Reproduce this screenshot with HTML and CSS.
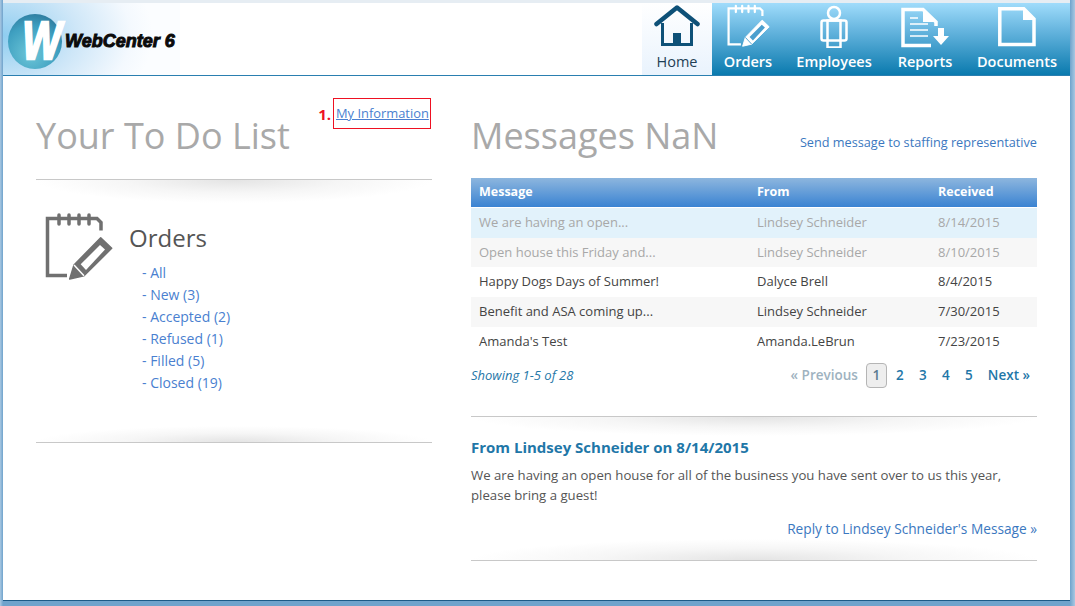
FILE: index.html
```html
<!DOCTYPE html>
<html lang="en">
<head>
<meta charset="utf-8">
<title>WebCenter 6</title>
<link rel="stylesheet" href="styles.css">
</head>
<body>
<div class="window">
  <header class="topbar">
    <div class="logo">
      <span class="logo-ball"><span class="logo-w">W</span></span>
      <span class="logo-text">WebCenter 6</span>
    </div>
    <nav class="nav">
      <a class="nav-item nav-home">
        <svg class="nav-icon" width="46" height="44" viewBox="0 0 46 44"><path d="M2.500 20 23 3.500 43.500 20" fill="none" stroke="#0e5178" stroke-width="4.500" stroke-linecap="round" stroke-linejoin="round"/><path d="M8.500 19v21.500h29V19" fill="none" stroke="#0e5178" stroke-width="3"/><rect x="19" y="29" width="8" height="12" fill="#0e5178"/></svg>
        <span>Home</span>
      </a>
      <a class="nav-item nav-orders">
        <svg class="nav-icon" width="43" height="44" viewBox="0 0 68 68"><path d="M22 63H2.500V6H52l4 4v8" fill="none" stroke="#fff" stroke-width="3.500"/><path d="M14 2v10M24 2v10M34 2v10M44 2v10" stroke="#fff" stroke-width="3.500" stroke-linecap="round"/><path d="M24.700 66 29 52 55.700 24.700l11 10.600L39 62.700z" fill="#fff" stroke="#fff" stroke-width="1.500" stroke-linejoin="round"/><path d="M35.700 51.300 55 32l5 4.500L41 57z" fill="#4a9fce"/><path d="M29 52l10 10.700" stroke="#4a9fce" stroke-width="1.500"/></svg>
        <span>Orders</span>
      </a>
      <a class="nav-item nav-emp">
        <svg class="nav-icon" width="30" height="44" viewBox="0 0 30 44"><circle cx="15" cy="9" r="6" fill="none" stroke="#fff" stroke-width="2.500"/><rect x="2.500" y="16.500" width="25" height="20" rx="2" fill="none" stroke="#fff" stroke-width="2.500"/><rect x="8.500" y="16.500" width="13" height="27" fill="none" stroke="#fff" stroke-width="2.500"/></svg>
        <span>Employees</span>
      </a>
      <a class="nav-item nav-rep">
        <svg class="nav-icon" width="50" height="44" viewBox="0 0 50 44"><path d="M31 41.500H3V5.500h20L36 18v4" fill="none" stroke="#fff" stroke-width="3.500"/><path d="M23 5v13h13z" fill="#fff"/><path d="M10 14h8M10 20h18M10 26h18M10 32h18" stroke="#fff" stroke-width="1.500"/><path d="M38 24h6v8h5l-8 9-8-9h5z" fill="#fff"/></svg>
        <span>Reports</span>
      </a>
      <a class="nav-item nav-doc">
        <svg class="nav-icon" width="38" height="44" viewBox="0 0 38 44"><path d="M1.800 4.800h24L36 15v25.500H1.800z" fill="none" stroke="#fff" stroke-width="3.500"/><path d="M25 4v12h12z" fill="#fff"/></svg>
        <span>Documents</span>
      </a>
    </nav>
  </header>

  <main class="content">
    <section class="col-left">
      <div class="title-row">
        <h1 class="page-title">Your To Do List</h1>
        <div class="info-callout">
          <span class="callout-num">1.</span>
          <a class="callout-link">My Information</a>
        </div>
      </div>
      <div class="rule rule-down"></div>
      <div class="todo">
        <svg class="todo-icon" width="68" height="68" viewBox="0 0 68 68"><path d="M22 62.500H2.500V5.500H52l4 4v8" fill="none" stroke="#707070" stroke-width="3.500"/><path d="M14 2v9M24 2v9M34 2v9M44 2v9" stroke="#707070" stroke-width="3.500" stroke-linecap="round"/><path d="M24.700 66 29 52 55.700 24.700l11 10.600L39 62.700z" fill="#707070" stroke="#707070" stroke-width="1.500" stroke-linejoin="round"/><path d="M35.700 51.300 55 32l5 4.500L41 57z" fill="#fff"/><path d="M29 52l10 10.700" stroke="#fff" stroke-width="1.500"/></svg>
        <div class="todo-body">
          <h2 class="todo-title">Orders</h2>
          <ul class="todo-list">
            <li>- All</li>
            <li>- New (3)</li>
            <li>- Accepted (2)</li>
            <li>- Refused (1)</li>
            <li>- Filled (5)</li>
            <li>- Closed (19)</li>
          </ul>
        </div>
      </div>
      <div class="rule rule-up todo-end"></div>
    </section>

    <section class="col-right">
      <div class="msg-head">
        <h1 class="page-title">Messages NaN</h1>
        <a class="send-link">Send message to staffing representative</a>
      </div>
      <div class="msg-table">
        <div class="msg-row msg-header"><span>Message</span><span>From</span><span>Received</span></div>
        <div class="msg-row is-selected is-read"><span>We are having an open...</span><span>Lindsey Schneider</span><span>8/14/2015</span></div>
        <div class="msg-row is-alt is-read"><span>Open house this Friday and...</span><span>Lindsey Schneider</span><span>8/10/2015</span></div>
        <div class="msg-row"><span>Happy Dogs Days of Summer!</span><span>Dalyce Brell</span><span>8/4/2015</span></div>
        <div class="msg-row is-alt"><span>Benefit and ASA coming up...</span><span>Lindsey Schneider</span><span>7/30/2015</span></div>
        <div class="msg-row"><span>Amanda's Test</span><span>Amanda.LeBrun</span><span>7/23/2015</span></div>
      </div>
      <div class="pager-row">
        <em class="showing">Showing 1-5 of 28</em>
        <div class="pager">
          <span class="pg-prev">« Previous</span>
          <span class="pg-cur">1</span>
          <a class="pg">2</a><a class="pg">3</a><a class="pg">4</a><a class="pg">5</a>
          <a class="pg-next">Next »</a>
        </div>
      </div>
      <div class="rule rule-down pager-end"></div>
      <h3 class="detail-title">From Lindsey Schneider on 8/14/2015</h3>
      <p class="detail-text">We are having an open house for all of the business you have sent over to us this year, please bring a guest!</p>
      <a class="reply-link">Reply to Lindsey Schneider's Message »</a>
      <div class="rule rule-up detail-end"></div>
    </section>
  </main>
</div>
</body>
</html>
```

FILE: styles.css
```css
* { box-sizing: border-box; }
html, body { margin: 0; height: 100%; }
body {
  background: linear-gradient(90deg, #a9c8e2 0, #6fa3cc 3px, #6fa3cc 1070px, #a9c8e2 1075px);
  font-family: "Open Sans", "Noto Sans", sans-serif;
  overflow: hidden;
}
.window {
  width: 1067px;
  height: 597px;
  margin: 3px 0 0 3px;
  background: #fff;
  box-shadow: 0 1px 0 #1d5a87, 0 -3px 0 #e6edf3;
  display: flex;
  flex-direction: column;
}
.topbar {
  height: 73px;
  flex: none;
  display: flex;
  justify-content: space-between;
  border-bottom: 1px solid #2a7fb0;
}
.logo {
  width: 177px;
  display: flex;
  align-items: center;
  gap: 3px;
  padding: 4px 0 0 5px;
  background: radial-gradient(ellipse 150px 100px at 0 45%, #8fcdf0 0%, #cfe7f8 50%, #f4f9fe 85%, #fbfdff 100%);
}
.logo-ball {
  width: 54px;
  height: 55px;
  border-radius: 50%;
  background: radial-gradient(circle at 42% 72%, #6cc6d8 0%, #3e9fc0 55%, #236388 100%);
  display: flex;
  align-items: center;
  justify-content: flex-end;
  flex: none;
}
.logo-w {
  display: inline-block;
  font: italic 700 46px/1 "Liberation Sans", sans-serif;
  color: #fff;
  -webkit-text-stroke: 2px #fff;
  transform: scale(.9, 1.15);
  margin-right: -1px;
}
.logo-text {
  font: italic 700 18px/1 "Liberation Sans", sans-serif;
  color: #0b0b0b;
  -webkit-text-stroke: 1px #0b0b0b;
  white-space: nowrap;
}
.nav {
  display: flex;
  background: linear-gradient(#a0dcfb 0%, #63b3dd 40%, #0a7aae 100%);
  height: 72px;
  width: 428px;
  flex: none;
}
.nav-item {
  display: flex;
  flex-direction: column;
  align-items: center;
  justify-content: flex-end;
  color: #fff;
  font-size: 14.500px;
  font-weight: 600;
  line-height: 20px;
  padding-bottom: 3px;
  white-space: nowrap;
}
.nav-icon { display: block; margin-bottom: 4px; }
.nav-home { width: 70px; color: #1f3f55; font-weight: 400; background: linear-gradient(#fff, #e9f3fd); }
.nav-orders { width: 72px; }
.nav-emp { width: 100px; }
.nav-rep { width: 82px; }
.nav-doc { width: 102px; }
.content {
  flex: 1;
  display: flex;
  padding: 0 33px;
  gap: 39px;
}
.col-left { width: 396px; flex: none; }
.col-right { width: 566px; flex: none; }
.title-row {
  height: 103px;
  position: relative;
  padding-top: 35px;
}
.page-title {
  margin: 0;
  font-size: 36px;
  line-height: 50px;
  font-weight: 400;
  color: #a9a9a9;
  white-space: nowrap;
}
.info-callout {
  position: absolute;
  right: 1px;
  top: 22px;
  display: flex;
  align-items: center;
  gap: 2px;
}
.callout-num {
  color: #ee1122;
  font-weight: 700;
  font-size: 15px;
}
.callout-link {
  border: 1px solid #ee1122;
  height: 31px;
  width: 98px;
  padding: 5px 2px;
  font-size: 12.900px;
  line-height: 18px;
  color: #4a7fd0;
  text-decoration: underline;
  white-space: nowrap;
}
.rule { border-top: 1px solid #c8c8c8; height: 24px; }
.rule-down {
  background: radial-gradient(ellipse 50% 100% at 50% 0, #e4e4e4 0%, #f6f6f6 55%, #fff 100%);
}
.rule-up {
  border-top: 0;
  border-bottom: 1px solid #c8c8c8;
  background: radial-gradient(ellipse 50% 100% at 50% 100%, #e4e4e4 0%, #f6f6f6 55%, #fff 100%);
}
.todo {
  display: flex;
  padding: 9px 0 0 9px;
  gap: 16px;
}
.todo-icon { flex: none; margin-top: 1px; }
.todo-title {
  margin: 0;
  font-size: 24px;
  line-height: 34px;
  font-weight: 400;
  color: #555;
  padding-top: 9px;
}
.todo-list {
  list-style: none;
  margin: 7px 0 0;
  padding: 0 0 0 13px;
  font-size: 14px;
  line-height: 22px;
  color: #4a7fd0;
}
.todo-end { margin-top: 32px; height: 17px; }
.msg-head {
  height: 103px;
  padding-top: 35px;
  display: flex;
  justify-content: space-between;
  align-items: flex-start;
}
.send-link {
  font-size: 12.700px;
  color: #3b78c0;
  line-height: 20px;
  margin-top: 21px;
  white-space: nowrap;
}
.msg-row {
  display: grid;
  grid-template-columns: 278px 181px 1fr;
  padding: 0 0 2px 8px;
  height: 29.700px;
  align-items: center;
  font-size: 13px;
  color: #444;
  white-space: nowrap;
}
.msg-header {
  height: 30px;
  font-size: 12.500px;
  font-weight: 700;
  color: #fff;
  background: linear-gradient(#8db6de, #3a83d2);
  border-bottom: 1px solid #fff;
  margin-top: -1px;
}
.is-selected { background: #e2f2fb; }
.is-alt { background: #f7f7f7; }
.is-read { color: #a8a8a8; }
.pager-row {
  display: flex;
  justify-content: space-between;
  align-items: center;
  height: 38px;
}
.showing { font-size: 13px; color: #1f77a8; }
.pager {
  display: flex;
  align-items: center;
  font-size: 13.500px;
  font-weight: 600;
  color: #1f77a8;
  padding-right: 7px;
}
.pg-prev { color: #9eb2c0; margin-right: 8px; }
.pg-cur {
  width: 21px;
  height: 25px;
  border: 1px solid #b5b5b5;
  border-radius: 4px;
  background: #eee;
  color: #5a7a90;
  text-align: center;
  line-height: 23px;
}
.pg { width: 23px; text-align: center; margin-left: 0; transform: translateX(1.500px); }
.pg-next { margin-left: 9px; }
.pager-end { margin-top: 22px; height: 20px; }
.detail-title {
  margin: 0;
  font-size: 15px;
  line-height: 22px;
  font-weight: 700;
  color: #1f77a8;
}
.detail-text {
  margin: 8px 0 0;
  font-size: 13.200px;
  line-height: 19.500px;
  color: #555;
  width: 550px;
}
.reply-link {
  display: block;
  text-align: right;
  font-size: 13.700px;
  line-height: 20px;
  color: #3b78c0;
  margin-top: 14px;
}
.detail-end { height: 22px; }
```
